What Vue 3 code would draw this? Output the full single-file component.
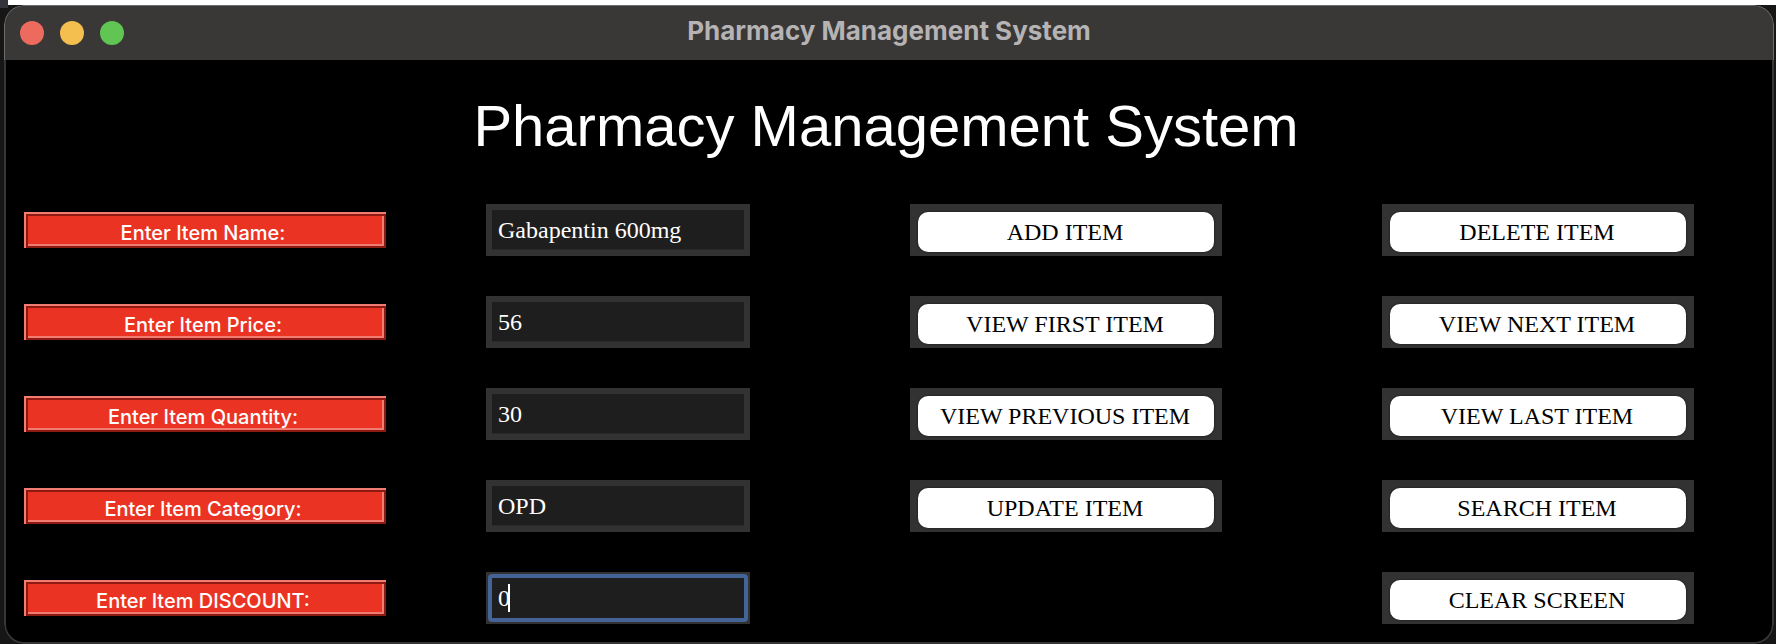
<script setup>
import { reactive } from 'vue'

const fields = reactive([
  { id: 'name', label: 'Enter Item Name:', value: 'Gabapentin 600mg' },
  { id: 'price', label: 'Enter Item Price:', value: '56' },
  { id: 'quantity', label: 'Enter Item Quantity:', value: '30' },
  { id: 'category', label: 'Enter Item Category:', value: 'OPD' },
  { id: 'discount', label: 'Enter Item DISCOUNT:', value: '0', active: true },
])

const actions = [
  ['ADD ITEM', 'DELETE ITEM'],
  ['VIEW FIRST ITEM', 'VIEW NEXT ITEM'],
  ['VIEW PREVIOUS ITEM', 'VIEW LAST ITEM'],
  ['UPDATE ITEM', 'SEARCH ITEM'],
  ['', 'CLEAR SCREEN'],
]
</script>

<template>
  <div class="desktop">
    <div class="strip"></div>
    <main class="window">
      <header class="titlebar">
        <div class="lights">
          <button type="button" class="light close" aria-label="Close"></button>
          <button type="button" class="light minimise" aria-label="Minimise"></button>
          <button type="button" class="light zoom" aria-label="Zoom"></button>
        </div>
        <div class="title">Pharmacy Management System</div>
      </header>
      <div class="body">
        <h1>Pharmacy Management System</h1>
        <form class="rows" @submit.prevent>
          <div v-for="(field, i) in fields" :key="field.id" class="row">
            <label class="tag" :for="field.id">{{ field.label }}</label>
            <div class="field" :class="{ active: field.active }">
              <input :id="field.id" v-model="field.value" type="text" autocomplete="off" />
              <span v-if="field.active" class="caret"></span>
            </div>
            <div v-for="(text, j) in actions[i]" :key="j" :class="text ? 'action' : 'blank'">
              <button v-if="text" type="button">{{ text }}</button>
            </div>
          </div>
        </form>
      </div>
    </main>
  </div>
</template>

<style>
body {
  margin: 0;
  background: #161616;
}
</style>

<style scoped>
.desktop {
  box-sizing: border-box;
  min-height: 100vh;
  display: flex;
  flex-direction: column;
  background: linear-gradient(#34343c 8px, #161616 8px);
  font-family: Inter, "Liberation Sans", sans-serif;
}
.strip {
  height: 5px;
  margin-left: 8px;
  background: #fff;
  box-shadow: 0 3px 0 #161616;
}
.window {
  flex: 1;
  display: flex;
  flex-direction: column;
  margin: 0 2px 0 4px;
  border-radius: 20px;
  overflow: hidden;
  background: #000;
}
.titlebar {
  box-sizing: border-box;
  height: 55px;
  display: grid;
  grid-template-columns: 1fr auto 1fr;
  align-items: center;
  padding: 0 15px;
  background: #3a3737;
  border: 1px solid #6d6b6b;
  border-bottom: 0;
  border-radius: 20px 20px 0 0;
}
.lights {
  display: flex;
  gap: 16px;
}
.light {
  width: 24px;
  height: 24px;
  padding: 0;
  border: 0;
  border-radius: 50%;
}
.close { background: #ed6a5e; }
.minimise { background: #f5bf4f; }
.zoom { background: #61c554; }
.title {
  padding-bottom: 4px;
  color: #b5b3b3;
  font-size: 26px;
  font-weight: 700;
  line-height: 32px;
}
.body {
  flex: 1;
  border: 2px solid #363636;
  border-top: 0;
  border-radius: 0 0 20px 20px;
}
h1 {
  margin: 0;
  padding: 28px 6px 40px 0;
  color: #fff;
  font-family: "Liberation Sans", Arial, sans-serif;
  font-size: 58px;
  font-weight: 400;
  line-height: 76px;
  text-align: center;
}
.rows {
  display: flex;
  flex-direction: column;
  gap: 40px;
  padding-left: 18px;
}
.row {
  display: grid;
  grid-template-columns: 462fr 424fr 472fr 390fr;
  align-items: center;
  min-height: 52px;
}
.tag {
  box-sizing: border-box;
  height: 36px;
  margin-right: 100px;
  padding: 3px 4px 0 0;
  background: #eb3323;
  color: #fff;
  font-size: 20px;
  font-weight: 500;
  line-height: 36px;
  text-align: center;
  box-shadow: inset 2px 2px 0 #f27b72, inset -2px -2px 0 #8c1a11,
    inset 4px 4px 0 #8c1a11, inset -4px -4px 0 #f27b72;
}
.field {
  position: relative;
  margin-right: 160px;
  padding: 2px;
  background: #323232;
}
.field input {
  box-sizing: border-box;
  display: block;
  width: 100%;
  height: 48px;
  padding: 0 6px;
  border: 4px solid #323232;
  border-radius: 4px;
  outline: none;
  background: #1e1e1e;
  box-shadow: inset 0 -1px 0 #292929;
  color: #fff;
  font-family: "Liberation Serif", serif;
  font-size: 24px;
}
.field.active input {
  border-color: #446498;
  box-shadow: none;
}
.caret {
  position: absolute;
  left: 22px;
  top: 12px;
  width: 2px;
  height: 28px;
  background: #fff;
}
.action {
  padding: 8px 8px 4px;
  background: #323232;
  margin-right: 160px;
}
.action:last-child {
  margin-right: 78px;
}
.action button {
  display: block;
  width: 100%;
  height: 40px;
  padding: 0 2px 0 0;
  border: 0;
  border-radius: 10px;
  background: #fff;
  box-shadow: 0 0 2px #111;
  color: #000;
  font-family: "Liberation Serif", serif;
  font-size: 24px;
  line-height: 40px;
}
</style>
